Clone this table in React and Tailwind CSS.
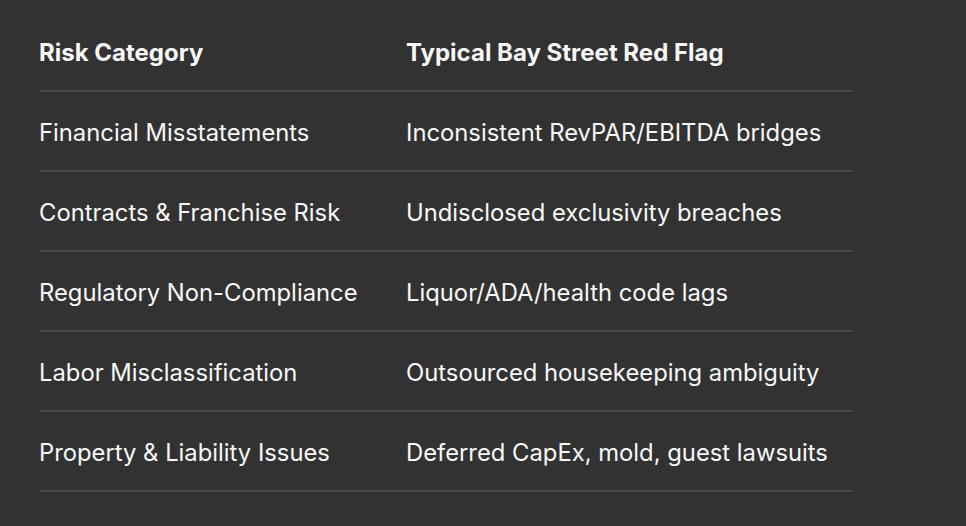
const rows = [
  ["Financial Misstatements", "Inconsistent RevPAR/EBITDA bridges"],
  ["Contracts & Franchise Risk", "Undisclosed exclusivity breaches"],
  ["Regulatory Non-Compliance", "Liquor/ADA/health code lags"],
  ["Labor Misclassification", "Outsourced housekeeping ambiguity"],
  ["Property & Liability Issues", "Deferred CapEx, mold, guest lawsuits"],
];

export default function App() {
  return (
    <div className="min-h-screen w-full bg-[#323232] pl-[39px] pt-[12px] font-['Inter',sans-serif] text-[#f7f7f7]">
      <div className="w-[814px]">
        {/* header */}
        <div className="flex h-[80px] items-center border-b-2 border-[#474747] pt-[4px] text-[24px] font-bold">
          <div className="w-[367px]">Risk Category</div>
          <div>Typical Bay Street Red Flag</div>
        </div>
        {rows.map(([risk, flag]) => (
          <div
            key={risk}
            className="flex h-[80px] items-center border-b-2 border-[#474747] pt-[4px] text-[23.8px]"
          >
            <div className="w-[367px]">{risk}</div>
            <div>{flag}</div>
          </div>
        ))}
      </div>
    </div>
  );
}
